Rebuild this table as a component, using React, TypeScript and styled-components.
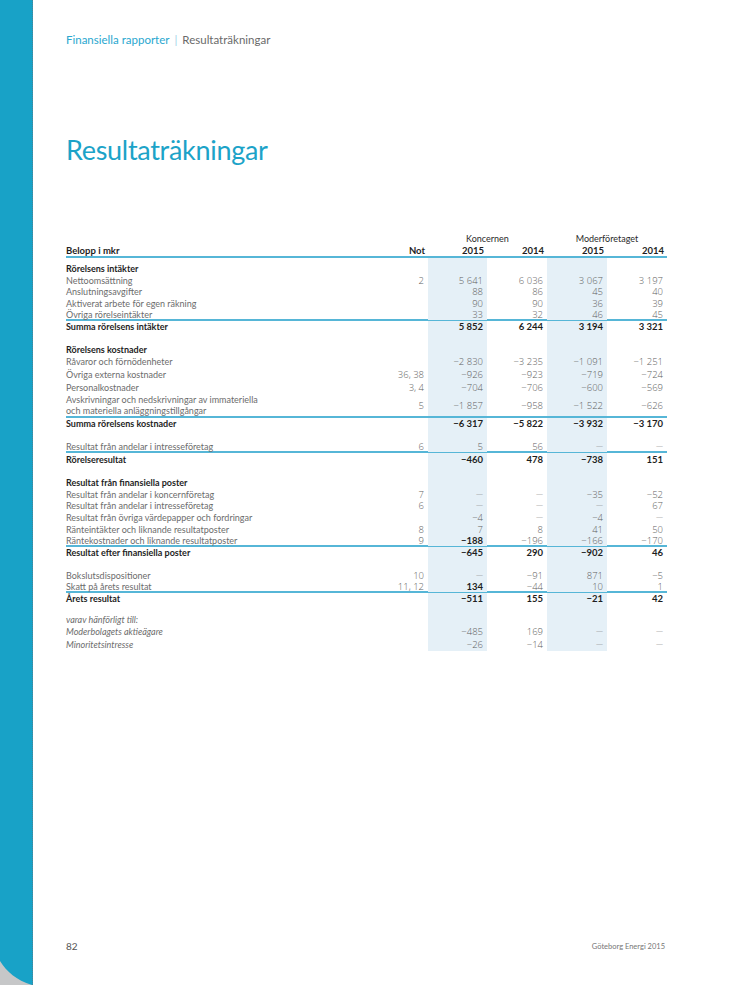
import React from 'react';
import styled, { createGlobalStyle } from 'styled-components';

const Global = createGlobalStyle`
  html, body { margin: 0; padding: 0; background: #fff; }
  body { font-family: Lato, "Noto Sans", sans-serif; -webkit-font-smoothing: antialiased; }
  * { box-sizing: border-box; }
`;

const COLS = '322px 40px 59px 60px 60px 60px';
const LINE = '#56b6d7';

const Page = styled.div`
  display: flex;
  width: 746px;
  height: 985px;
  overflow: hidden;
  background: #fff;
`;

const Spine = styled.aside`
  width: 33px;
  flex: none;
  display: flex;
  flex-direction: column;
  justify-content: flex-end;
  background: #18a2c7;
  border-right: 1px dotted #4d8294;
`;

const Curl = styled.svg`
  display: block;
  width: 32px;
  height: 24px;
`;

const Main = styled.main`
  flex: 1;
  display: flex;
  flex-direction: column;
  padding: 33px 79px 33px 33px;
`;

const Crumbs = styled.div`
  display: flex;
  align-items: baseline;
  font-size: 11.5px;
  line-height: 13px;
  color: #6a6a6a;
`;

const CrumbLink = styled.span`
  color: #29a7cf;
`;

const CrumbSep = styled.span`
  color: #9fd3e6;
  margin: 0 5px;
`;

const Title = styled.h1`
  margin: 88px 0 0;
  font-size: 27px;
  line-height: 32px;
  font-weight: 400;
  color: #1ca3c8;
  letter-spacing: -0.3px;
`;

const Table = styled.section`
  margin-top: 67px;
  display: flex;
  flex-direction: column;
`;

const Row = styled.div<{ $h: number; $line?: boolean }>`
  display: grid;
  grid-template-columns: ${COLS};
  height: ${(p) => p.$h}px;
  border-bottom: ${(p) => (p.$line ? `2px solid ${LINE}` : 'none')};
`;

const GroupHead = styled.div<{ $col: number }>`
  grid-column: ${(p) => p.$col} / span 2;
  text-align: center;
  font-size: 9px;
  line-height: 12px;
  color: #2a2a2a;
`;

const HeadCell = styled.div<{ $right?: boolean }>`
  display: flex;
  align-items: center;
  justify-content: ${(p) => (p.$right ? 'flex-end' : 'flex-start')};
  padding-right: ${(p) => (p.$right ? '3px' : '0')};
  font-size: 9.5px;
  line-height: 11px;
  font-weight: 700;
  color: #1e1e1e;
`;

type Tone = 'sec' | 'item' | 'sum' | 'ital';

const Label = styled.div<{ $tone: Tone }>`
  display: flex;
  flex-direction: column;
  justify-content: center;
  font-size: 9px;
  line-height: 11px;
  white-space: nowrap;
  color: ${(p) => (p.$tone === 'sec' || p.$tone === 'sum' ? '#1e1e1e' : '#6c6c6c')};
  font-weight: ${(p) => (p.$tone === 'sec' || p.$tone === 'sum' ? 700 : 400)};
  font-style: ${(p) => (p.$tone === 'ital' ? 'italic' : 'normal')};
`;

const Note = styled.div`
  display: flex;
  align-items: center;
  justify-content: flex-end;
  padding-right: 4px;
  font-family: "Open Sans", "DejaVu Sans", sans-serif;
  font-weight: 300;
  font-size: 9.5px;
  line-height: 11px;
  color: #5f5f5f;
  white-space: nowrap;
`;

const Num = styled.div<{ $shade: boolean; $strong: boolean }>`
  display: flex;
  align-items: center;
  justify-content: flex-end;
  padding-right: 4px;
  background: ${(p) => (p.$shade ? '#e5f0f7' : 'transparent')};
  white-space: nowrap;
  font-family: ${(p) => (p.$strong ? 'Lato, "Noto Sans", sans-serif' : '"Open Sans", "DejaVu Sans", sans-serif')};
  font-weight: ${(p) => (p.$strong ? 700 : 300)};
  font-size: 9.5px;
  line-height: 11px;
  color: ${(p) => (p.$strong ? '#1e1e1e' : '#5f5f5f')};
`;

const Dash = styled.span`
  font-family: "Open Sans", "DejaVu Sans", sans-serif;
  font-weight: 300;
  font-size: 7px;
  color: #8a8a8a;
`;

const Footer = styled.footer`
  margin-top: auto;
  display: flex;
  align-items: center;
  justify-content: space-between;
  height: 12px;
  padding-right: 2px;
`;

const PageNo = styled.span`
  font-size: 10px;
  color: #555;
`;

const Brand = styled.span`
  font-size: 7.5px;
  color: #777;
`;

type Line = {
  tone: Tone | 'gap';
  h: number;
  label?: string | string[];
  not?: string;
  v?: string[];
  strong?: number[];
  line?: boolean;
};

const D = '—';

const rows: Line[] = [
  { tone: 'gap', h: 4 },
  { tone: 'sec', h: 12, label: 'Rörelsens intäkter' },
  { tone: 'item', h: 12, label: 'Nettoomsättning', not: '2', v: ['5 641', '6 036', '3 067', '3 197'] },
  { tone: 'item', h: 11, label: 'Anslutningsavgifter', v: ['88', '86', '45', '40'] },
  { tone: 'item', h: 12, label: 'Aktiverat arbete för egen räkning', v: ['90', '90', '36', '39'] },
  { tone: 'item', h: 12, label: 'Övriga rörelseintäkter', v: ['33', '32', '46', '45'], line: true },
  { tone: 'sum', h: 11, label: 'Summa rörelsens intäkter', v: ['5 852', '6 244', '3 194', '3 321'] },
  { tone: 'gap', h: 11 },
  { tone: 'sec', h: 12, label: 'Rörelsens kostnader' },
  { tone: 'item', h: 13, label: 'Råvaror och förnödenheter', v: ['−2 830', '−3 235', '−1 091', '−1 251'] },
  { tone: 'item', h: 13, label: 'Övriga externa kostnader', not: '36, 38', v: ['−926', '−923', '−719', '−724'] },
  { tone: 'item', h: 13, label: 'Personalkostnader', not: '3, 4', v: ['−704', '−706', '−600', '−569'] },
  {
    tone: 'item',
    h: 24,
    label: ['Avskrivningar och nedskrivningar av immateriella', 'och materiella anläggningstillgångar'],
    not: '5',
    v: ['−1 857', '−958', '−1 522', '−626'],
    line: true,
  },
  { tone: 'sum', h: 11, label: 'Summa rörelsens kostnader', v: ['−6 317', '−5 822', '−3 932', '−3 170'] },
  { tone: 'gap', h: 12 },
  { tone: 'item', h: 12, label: 'Resultat från andelar i intresseföretag', not: '6', v: ['5', '56', D, D], line: true },
  { tone: 'sum', h: 12, label: 'Rörelseresultat', v: ['−460', '478', '−738', '151'] },
  { tone: 'gap', h: 11 },
  { tone: 'sec', h: 12, label: 'Resultat från finansiella poster' },
  { tone: 'item', h: 12, label: 'Resultat från andelar i koncernföretag', not: '7', v: [D, D, '−35', '−52'] },
  { tone: 'item', h: 11, label: 'Resultat från andelar i intresseföretag', not: '6', v: [D, D, D, '67'] },
  { tone: 'item', h: 12, label: 'Resultat från övriga värdepapper och fordringar', v: ['−4', D, '−4', D] },
  { tone: 'item', h: 12, label: 'Ränteintäkter och liknande resultatposter', not: '8', v: ['7', '8', '41', '50'] },
  {
    tone: 'item',
    h: 12,
    label: 'Räntekostnader och liknande resultatposter',
    not: '9',
    v: ['−188', '−196', '−166', '−170'],
    strong: [0],
    line: true,
  },
  { tone: 'sum', h: 10, label: 'Resultat efter finansiella poster', v: ['−645', '290', '−902', '46'] },
  { tone: 'gap', h: 12 },
  { tone: 'item', h: 12, label: 'Bokslutsdispositioner', not: '10', v: [D, '−91', '871', '−5'] },
  { tone: 'item', h: 12, label: 'Skatt på årets resultat', not: '11, 12', v: ['134', '−44', '10', '1'], strong: [0], line: true },
  { tone: 'sum', h: 11, label: 'Årets resultat', v: ['−511', '155', '−21', '42'] },
  { tone: 'gap', h: 9 },
  { tone: 'ital', h: 12, label: 'varav hänförligt till:' },
  { tone: 'ital', h: 12, label: 'Moderbolagets aktieägare', v: ['−485', '169', D, D] },
  { tone: 'ital', h: 14, label: 'Minoritetsintresse', v: ['−26', '−14', D, D] },
];

const SHADED = [true, false, true, false];

function BodyRow({ r }: { r: Line }) {
  const vals = r.v ?? ['', '', '', ''];
  const labels = Array.isArray(r.label) ? r.label : r.label ? [r.label] : [];
  return (
    <Row $h={r.h} $line={r.line}>
      <Label $tone={r.tone === 'gap' ? 'item' : r.tone}>
        {labels.map((t) => (
          <span key={t}>{t}</span>
        ))}
      </Label>
      <Note>{r.not ?? ''}</Note>
      {vals.map((v, i) => (
        <Num key={i} $shade={SHADED[i]} $strong={r.tone === 'sum' || (r.strong ?? []).includes(i)}>
          {v === D ? <Dash>{D}</Dash> : v}
        </Num>
      ))}
    </Row>
  );
}

export default function App() {
  return (
    <>
      <Global />
      <Page>
        <Spine>
          <Curl viewBox="0 0 32 24" preserveAspectRatio="none">
            <path d="M0 0 C 7 11, 16 19, 32 24 L 0 24 Z" fill="#c6c7c8" />
          </Curl>
        </Spine>
        <Main>
          <Crumbs>
            <CrumbLink>Finansiella rapporter</CrumbLink>
            <CrumbSep>|</CrumbSep>
            <span>Resultaträkningar</span>
          </Crumbs>
          <Title>Resultaträkningar</Title>
          <Table>
            <Row $h={12}>
              <GroupHead $col={3}>Koncernen</GroupHead>
              <GroupHead $col={5}>Moderföretaget</GroupHead>
            </Row>
            <Row $h={13} $line>
              <HeadCell>Belopp i mkr</HeadCell>
              <HeadCell $right>Not</HeadCell>
              <HeadCell $right>2015</HeadCell>
              <HeadCell $right>2014</HeadCell>
              <HeadCell $right>2015</HeadCell>
              <HeadCell $right>2014</HeadCell>
            </Row>
            {rows.map((r, i) => (
              <BodyRow key={i} r={r} />
            ))}
          </Table>
          <Footer>
            <PageNo>82</PageNo>
            <Brand>Göteborg Energi 2015</Brand>
          </Footer>
        </Main>
      </Page>
    </>
  );
}
